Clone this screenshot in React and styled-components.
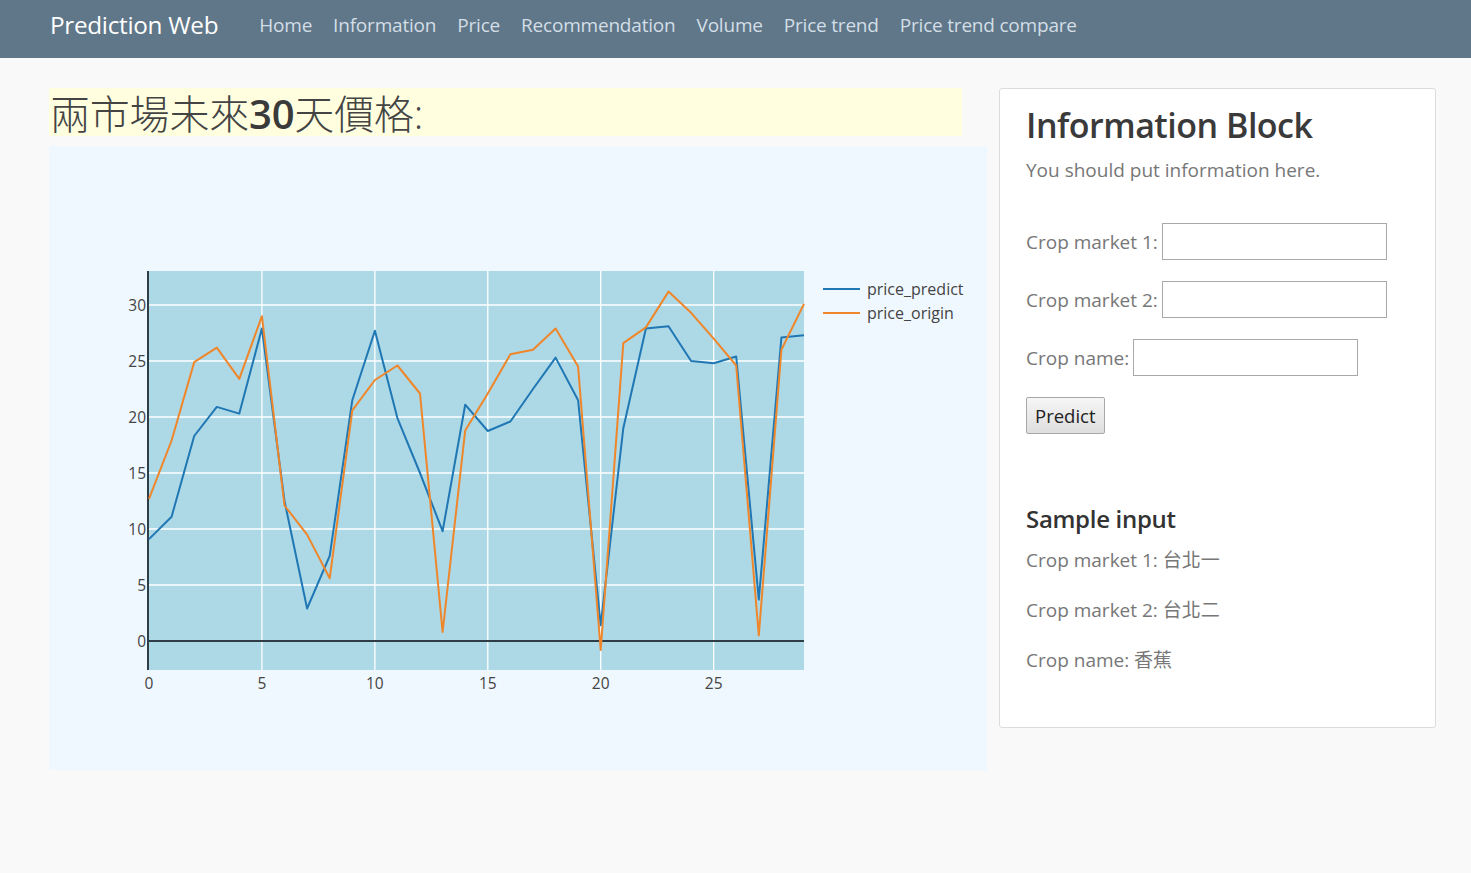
import React from "react";
import styled, { createGlobalStyle } from "styled-components";

const GlobalStyle = createGlobalStyle`
    body {
        margin: 0;
        background: #f9f9f9;
        font-family: "Open Sans", "Noto Sans CJK TC", sans-serif;
        color: #333;
    }
`;

const Navbar = styled.nav`
    display: flex;
    align-items: center;
    height: 58px;
    box-sizing: border-box;
    padding: 0 50px 9px;
    background: #5f7788;
`;

const Brand = styled.a`
    font-size: 24.3px;
    color: #fff;
    text-decoration: none;
    margin-right: 41px;
    letter-spacing: -0.3px;
`;

const NavLinks = styled.ul`
    display: flex;
    gap: 21px;
    margin: 0;
    padding: 0;
    list-style: none;
`;

const NavLink = styled.a`
    font-size: 19px;
    color: #d3dee7;
    text-decoration: none;
    letter-spacing: -0.2px;
`;

const Page = styled.main`
    display: flex;
    align-items: flex-start;
    gap: 12px;
    padding: 30px 35px 0 49px;
`;

const LeftColumn = styled.section`
    display: flex;
    flex-direction: column;
    gap: 10px;
    width: 938px;
`;

const Title = styled.h1`
    width: 913px;
    height: 48px;
    box-sizing: border-box;
    margin: 0;
    padding: 2px 0 0 1px;
    background: #ffffe0;
    font-size: 40px;
    font-weight: 300;
    line-height: 48px;
    color: #444;
    letter-spacing: -0.2px;
`;

const Strong = styled.span`
    font-weight: 600;
    color: #3a3a3a;
`;

const ChartBox = styled.div`
    width: 938px;
    height: 624px;
    background: #f0f8ff;
`;

const Card = styled.aside`
    width: 437px;
    box-sizing: border-box;
    padding: 15px 26px 53px;
    background: #fff;
    border: 1px solid #dcdcdc;
    border-radius: 3px;
`;

const CardTitle = styled.h2`
    margin: 0;
    font-size: 34px;
    font-weight: 600;
    line-height: 43px;
    color: #3a3a3a;
    letter-spacing: -0.5px;
`;

const Muted = styled.p`
    margin: ${p => p.$top || 0}px 0 0;
    font-size: 19px;
    line-height: 27px;
    color: #777;
`;

const Form = styled.form`
    display: flex;
    flex-direction: column;
    align-items: flex-start;
    gap: 21px;
    margin-top: 39px;
`;

const Row = styled.label`
    display: flex;
    align-items: center;
    gap: 4px;
    font-size: 19px;
    color: #777;
`;

const TextInput = styled.input`
    width: 225px;
    height: 37px;
    box-sizing: border-box;
    border: 1px solid #a9a9a9;
    background: #fff;
    font-size: 16px;
`;

const Button = styled.button`
    height: 37px;
    padding: 0 8px;
    border: 1px solid #a8a8a8;
    border-radius: 2px;
    background: linear-gradient(#f6f6f6, #dedede);
    font-family: "Open Sans", sans-serif;
    font-size: 18.5px;
    color: #222;
`;

const SubTitle = styled.h3`
    margin: 70px 0 14px;
    font-size: 24px;
    font-weight: 600;
    line-height: 29px;
    color: #333;
    letter-spacing: -0.3px;
`;

const SampleList = styled.div`
    display: flex;
    flex-direction: column;
    gap: 23px;
`;

const predict = [9.1, 11.1, 18.3, 20.9, 20.3, 27.9, 12.5, 2.9, 7.6, 21.5, 27.7, 19.9, 15, 9.8, 21.1,
    18.75, 19.6, 22.5, 25.3, 21.5, 1.4, 19, 27.9, 28.1, 25, 24.8, 25.4, 3.7, 27.1, 27.3];
const origin = [12.7, 17.9, 24.9, 26.2, 23.4, 29.0, 12.1, 9.5, 5.6, 20.6, 23.3, 24.6, 22.1, 0.8, 18.8,
    22.1, 25.6, 26, 27.9, 24.5, -0.8, 26.6, 28, 31.2, 29.3, 27, 24.6, 0.5, 26, 30.1];

const PL = 100, PR = 755, PT = 125, PB = 524;
const sx = x => PL + x * (PR - PL) / 29;
const sy = y => 495 - y * 11.2;
const toPath = data => data.map((v, i) => `${i ? "L" : "M"}${sx(i).toFixed(1)},${sy(v).toFixed(1)}`).join(" ");

const Chart = () => (
    <svg width="938" height="624" fontFamily="'Open Sans', sans-serif">
        <rect x={PL} y={PT} width={PR - PL} height={PB - PT} fill="#add8e6" />
        {[0, 5, 10, 15, 20, 25].map(t => (
            <g key={"x" + t}>
                {t > 0 && <line x1={sx(t)} x2={sx(t)} y1={PT} y2={PB} stroke="#fff" strokeWidth="1.3" />}
                <text x={sx(t)} y={543} fontSize="15.5" fill="#444" textAnchor="middle">{t}</text>
            </g>
        ))}
        {[0, 5, 10, 15, 20, 25, 30].map(t => (
            <g key={"y" + t}>
                {t > 0 && <line x1={PL} x2={PR} y1={sy(t)} y2={sy(t)} stroke="#fff" strokeWidth="1.3" />}
                <text x={97} y={sy(t) + 6} fontSize="15.5" fill="#444" textAnchor="end">{t}</text>
            </g>
        ))}
        <line x1={PL} x2={PR} y1={sy(0)} y2={sy(0)} stroke="#2f3e46" strokeWidth="2" />
        <line x1={PL - 1} x2={PL - 1} y1={PT} y2={PB} stroke="#2f3e46" strokeWidth="2" />
        <path d={toPath(predict)} fill="none" stroke="#1f77b4" strokeWidth="2" strokeLinejoin="round" />
        <path d={toPath(origin)} fill="none" stroke="#f0862a" strokeWidth="2" strokeLinejoin="round" />
        <line x1="774" x2="811" y1="143" y2="143" stroke="#1f77b4" strokeWidth="2" />
        <text x="818" y="149" fontSize="16" fill="#444">price_predict</text>
        <line x1="774" x2="811" y1="167" y2="167" stroke="#f0862a" strokeWidth="2" />
        <text x="818" y="173" fontSize="16" fill="#444">price_origin</text>
    </svg>
);

const links = ["Home", "Information", "Price", "Recommendation", "Volume", "Price trend", "Price trend compare"];

const App = () => (
    <>
        <GlobalStyle />
        <Navbar>
            <Brand href="#">Prediction Web</Brand>
            <NavLinks>
                {links.map(l => <li key={l}><NavLink href="#">{l}</NavLink></li>)}
            </NavLinks>
        </Navbar>
        <Page>
            <LeftColumn>
                <Title>兩市場未來<Strong>30</Strong>天價格:</Title>
                <ChartBox><Chart /></ChartBox>
            </LeftColumn>
            <Card>
                <CardTitle>Information Block</CardTitle>
                <Muted $top={10}>You should put information here.</Muted>
                <Form onSubmit={e => e.preventDefault()}>
                    <Row>Crop market 1: <TextInput type="text" /></Row>
                    <Row>Crop market 2: <TextInput type="text" /></Row>
                    <Row>Crop name: <TextInput type="text" /></Row>
                    <Button type="submit">Predict</Button>
                </Form>
                <SubTitle>Sample input</SubTitle>
                <SampleList>
                    <Muted>Crop market 1: 台北一</Muted>
                    <Muted>Crop market 2: 台北二</Muted>
                    <Muted>Crop name: 香蕉</Muted>
                </SampleList>
            </Card>
        </Page>
    </>
);

export default App;
